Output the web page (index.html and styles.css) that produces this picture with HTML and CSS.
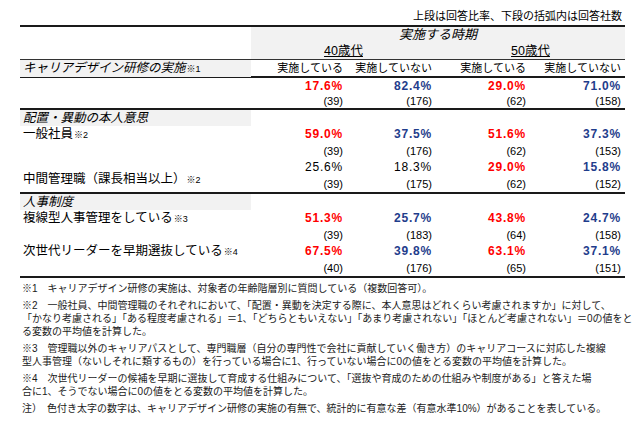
FILE: index.html
```html
<!DOCTYPE html>
<html lang="ja">
<head>
<meta charset="utf-8">
<link rel="stylesheet" href="styles.css">
</head>
<body>
<div class="page">
  <div class="caption">上段は回答比率、下段の括弧内は回答社数</div>
  <div class="tbl">
    <div class="grid head">
      <div class="blank"></div>
      <div class="hgray">
        <div class="period">実施する時期</div>
        <div class="ages">
          <span class="age">40歳代</span>
          <span class="age">50歳代</span>
        </div>
      </div>
    </div>
    <div class="grid colhead">
      <div class="lbl sect">キャリアデザイン研修の実施<span class="note">※1</span></div>
      <div class="num ch">実施している</div>
      <div class="num ch">実施していない</div>
      <div class="num ch">実施している</div>
      <div class="num ch">実施していない</div>
    </div>
    <div class="grid grp first">
      <div class="lbl"></div>
      <div class="num pct red">17.6%</div>
      <div class="num pct blue">82.4%</div>
      <div class="num pct red">29.0%</div>
      <div class="num pct blue">71.0%</div>
      <div class="num cnt c2">(39)</div>
      <div class="num cnt">(176)</div>
      <div class="num cnt">(62)</div>
      <div class="num cnt">(158)</div>
    </div>
    <div class="grid secthead">
      <div class="lbl sect">配置・異動の本人意思</div>
    </div>
    <div class="grid grp">
      <div class="lbl item">一般社員<span class="note">※2</span></div>
      <div class="num pct red">59.0%</div>
      <div class="num pct blue">37.5%</div>
      <div class="num pct red">51.6%</div>
      <div class="num pct blue">37.3%</div>
      <div class="num cnt c2">(39)</div>
      <div class="num cnt">(176)</div>
      <div class="num cnt">(62)</div>
      <div class="num cnt">(153)</div>
    </div>
    <div class="grid grp last">
      <div class="lbl item low">中間管理職（課長相当以上）<span class="note">※2</span></div>
      <div class="num pct plain">25.6%</div>
      <div class="num pct plain">18.3%</div>
      <div class="num pct red">29.0%</div>
      <div class="num pct blue">15.8%</div>
      <div class="num cnt c2">(39)</div>
      <div class="num cnt">(175)</div>
      <div class="num cnt">(62)</div>
      <div class="num cnt">(152)</div>
    </div>
    <div class="grid secthead">
      <div class="lbl sect">人事制度</div>
    </div>
    <div class="grid grp">
      <div class="lbl item">複線型人事管理をしている<span class="note">※3</span></div>
      <div class="num pct red">51.3%</div>
      <div class="num pct blue">25.7%</div>
      <div class="num pct red">43.8%</div>
      <div class="num pct blue">24.7%</div>
      <div class="num cnt c2">(39)</div>
      <div class="num cnt">(183)</div>
      <div class="num cnt">(64)</div>
      <div class="num cnt">(158)</div>
    </div>
    <div class="grid grp last">
      <div class="lbl item">次世代リーダーを早期選抜している<span class="note">※4</span></div>
      <div class="num pct red">67.5%</div>
      <div class="num pct blue">39.8%</div>
      <div class="num pct red">63.1%</div>
      <div class="num pct blue">37.1%</div>
      <div class="num cnt c2">(40)</div>
      <div class="num cnt">(176)</div>
      <div class="num cnt">(65)</div>
      <div class="num cnt">(151)</div>
    </div>
  </div>
  <div class="notes">
    <p>※1　キャリアデザイン研修の実施は、対象者の年齢階層別に質問している（複数回答可）。</p>
    <p>※2　一般社員、中間管理職のそれぞれにおいて、「配置・異動を決定する際に、本人意思はどれくらい考慮されますか」に対して、<br>「かなり考慮される」「ある程度考慮される」＝1、「どちらともいえない」「あまり考慮されない」「ほとんど考慮されない」＝0の値をと<br>る変数の平均値を計算した。</p>
    <p>※3　管理職以外のキャリアパスとして、専門職層（自分の専門性で会社に貢献していく働き方）のキャリアコースに対応した複線<br>型人事管理（ないしそれに類するもの）を行っている場合に1、行っていない場合に0の値をとる変数の平均値を計算した。</p>
    <p>※4　次世代リーダーの候補を早期に選抜して育成する仕組みについて、「選抜や育成のための仕組みや制度がある」と答えた場<br>合に1、そうでない場合に0の値をとる変数の平均値を計算した。</p>
    <p>注）　色付き太字の数字は、キャリアデザイン研修の実施の有無で、統計的に有意な差（有意水準10%）があることを表している。</p>
  </div>
</div>
</body>
</html>
```

FILE: styles.css
```css
html, body {
  margin: 0;
  padding: 0;
  background: #ffffff;
}
body {
  font-family: "Liberation Sans", "Noto Sans CJK JP", sans-serif;
  color: #000;
}
.page {
  width: 605px;
  padding-left: 20px;
}
.caption {
  height: 25px;
  box-sizing: border-box;
  display: flex;
  justify-content: flex-end;
  align-items: flex-end;
  padding-right: 3px;
  padding-bottom: 2px;
  font-size: 11px;
  line-height: 14px;
}
.tbl {
  border-top: 2px solid #1a1a1a;
  border-bottom: 2px solid #1a1a1a;
}
.grid {
  display: grid;
  grid-template-columns: 231px 96px 89px 94px 95px;
}
.head {
  height: 32px;
  border-bottom: 1px solid #333;
}
.hgray {
  grid-column: 2 / -1;
  background: #f2f2f2;
  display: grid;
  grid-template-rows: 16px 16px;
}
.period {
  text-align: center;
  font-size: 13px;
  line-height: 16px;
  font-style: italic;
}
.ages {
  display: grid;
  grid-template-columns: 185px 189px;
}
.age {
  text-align: center;
  font-size: 12.5px;
  line-height: 16px;
  text-decoration: underline;
  text-underline-offset: 1px;
}
.colhead {
  height: 16px;
  border-bottom: 2px solid #1a1a1a;
}
.lbl {
  padding-left: 3px;
  white-space: nowrap;
}
.sect {
  background: #f2f2f2;
  font-style: italic;
  font-size: 12.5px;
  line-height: 16px;
}
.note {
  font-style: normal;
  font-size: 9px;
  margin-left: 1px;
}
.num {
  text-align: right;
  padding-right: 4px;
  white-space: nowrap;
}
.ch {
  font-size: 11px;
  line-height: 16px;
}
.grp {
  grid-template-rows: 17px 16px;
}
.grp.first {
  grid-template-rows: 17px 13px;
  border-bottom: 2px solid #1a1a1a;
}
.grp.last {
  border-bottom: 2px solid #1a1a1a;
}
.grp:last-child {
  border-bottom: none;
}
.grp .lbl {
  grid-row: 1 / 3;
}
.item {
  font-size: 12.5px;
  line-height: 17px;
}
.low {
  align-self: center;
  padding-top: 8px;
}
.c2 {
  grid-column: 2;
}
.pct {
  font-size: 12px;
  font-weight: bold;
  letter-spacing: 0.8px;
  line-height: 17px;
}
.pct.plain {
  font-weight: normal;
}
.red { color: #ff0000; }
.blue { color: #1f3d8c; }
.cnt {
  font-size: 11px;
  line-height: 16px;
}
.first .cnt {
  line-height: 13px;
}
.secthead {
  height: 16px;
}
.notes {
  padding-top: 4px;
  padding-left: 2px;
  font-size: 10px;
  line-height: 13px;
  color: #1a1a1a;
  white-space: nowrap;
}
.notes p {
  margin: 0 0 4px 0;
}
```
